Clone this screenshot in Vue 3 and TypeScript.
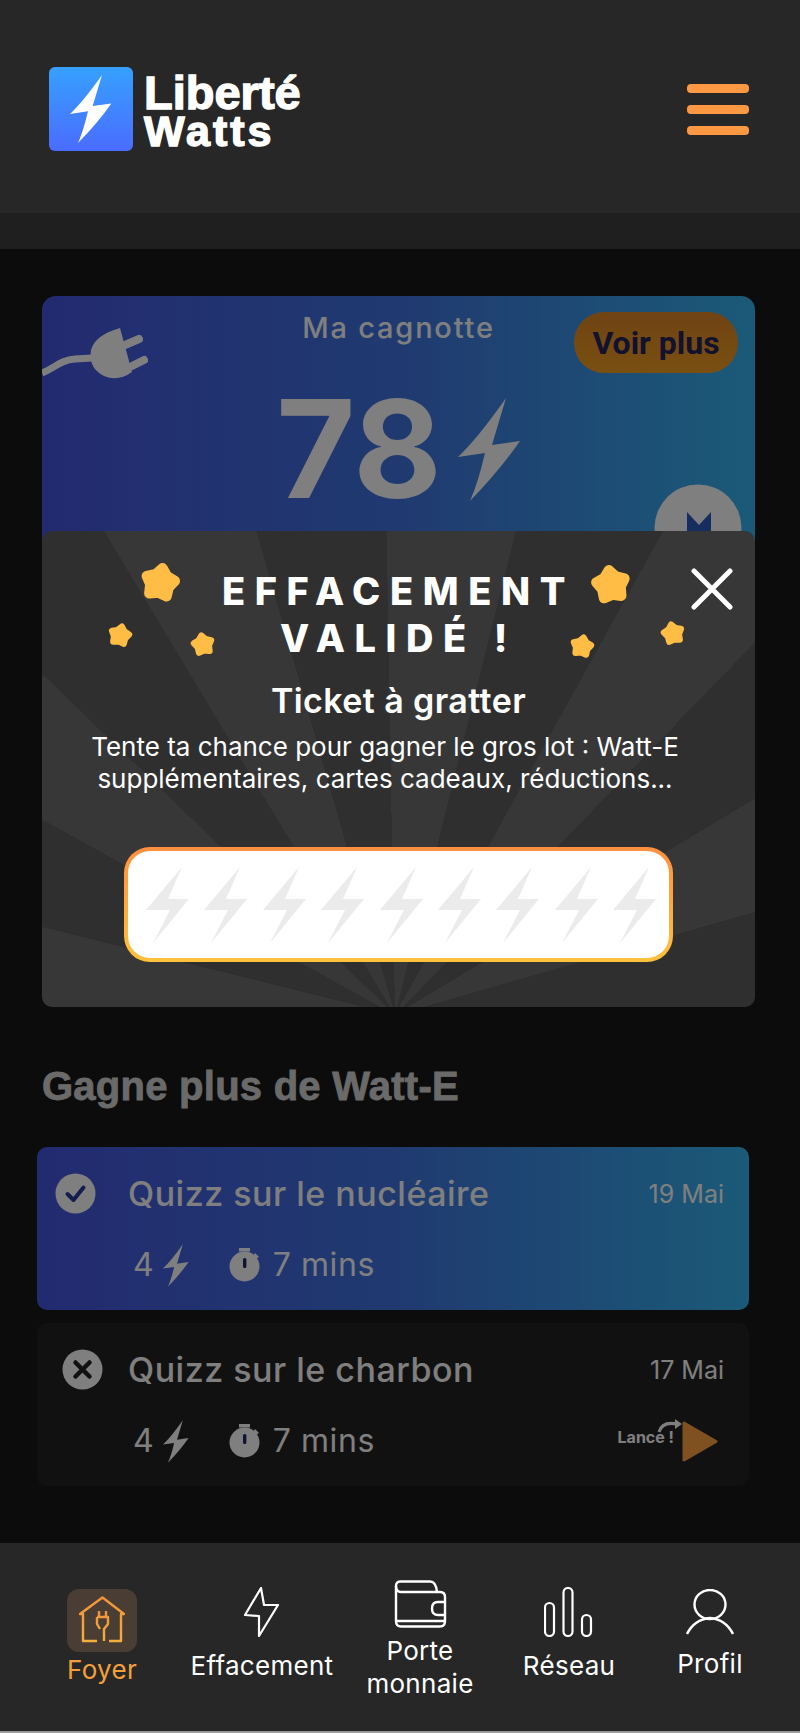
<script setup lang="ts">
interface Quiz {
  title: string
  date: string
  done: boolean
}

interface NavItem {
  lines: string[]
  icon: string
  active?: boolean
}

const quizzes: Quiz[] = [
  { title: 'Quizz sur le nucléaire', date: '19 Mai', done: true },
  { title: 'Quizz sur le charbon', date: '17 Mai', done: false },
]

const navItems: NavItem[] = [
  { lines: ['Foyer'], icon: 'home', active: true },
  { lines: ['Effacement'], icon: 'bolt' },
  { lines: ['Porte', 'monnaie'], icon: 'wallet' },
  { lines: ['Réseau'], icon: 'bars' },
  { lines: ['Profil'], icon: 'user' },
]

const scratchBolts = 9
const boltPath = 'M48 0Q20 40 0 59L27 55Q20 85 12 103Q42 72 62 43L34 47Q42 20 48 0Z'
const stars = ['a', 'b', 'c', 'd', 'e', 'f']
const starPoints = '20,7 25,13.1 32.4,16 28.1,22.6 27.6,30.5 20,28.5 12.4,30.5 11.9,22.6 7.6,16 15,13.1'
</script>

<template>
  <div class="page">
    <header class="topbar">
      <div class="logo">
        <div class="logo-mark">
          <svg width="42" height="68" viewBox="0 0 63 103" preserveAspectRatio="none"><path :d="boltPath" fill="#fff" /></svg>
        </div>
        <div class="logo-text">
          <span class="logo-top">Liberté</span>
          <span class="logo-bottom">Watts</span>
        </div>
      </div>
      <div class="burger"><span></span><span></span><span></span></div>
    </header>
    <div class="band"></div>

    <main class="content">
      <section class="wallet-card">
        <svg class="plug" width="106" height="56" viewBox="42 326 106 56">
          <path d="M120 328L132 372Q118 382 104 376Q88 368 91 350Q95 335 120 328Z" fill="#fff" />
          <path d="M125 345L139 339M132 366L144 360" stroke="#fff" stroke-width="8" stroke-linecap="round" />
          <path d="M42 373C55 368 60 360 75 359L92 358" stroke="#fff" stroke-width="7" fill="none" />
        </svg>
        <h2 class="wallet-title">Ma cagnotte</h2>
        <button class="more">Voir plus</button>
        <div class="balance">
          <span>78</span>
          <svg width="63" height="103" viewBox="0 0 63 103"><path :d="boltPath" fill="#fff" /></svg>
        </div>
        <svg class="coin" width="88" height="88" viewBox="0 0 88 88">
          <circle cx="44" cy="44" r="43.5" fill="#fff" />
          <path d="M33 28L45 41L57 28V62H33Z" fill="#2c5ac0" />
        </svg>
      </section>

      <h2 class="section-title">Gagne plus de Watt-E</h2>

      <article v-for="quiz in quizzes" :key="quiz.title" class="quiz" :class="{ done: quiz.done }">
        <div class="quiz-status">
          <svg width="41" height="41" viewBox="0 0 41 41">
            <circle cx="20.5" cy="20.5" r="20" fill="#fff" />
            <path v-if="quiz.done" d="M12.5 21L18.5 27L28.5 14.5" stroke="#2b3b9e" stroke-width="4" fill="none" stroke-linecap="round" stroke-linejoin="round" />
            <path v-else d="M13.5 13.5L27.5 27.5M27.5 13.5L13.5 27.5" stroke="#222" stroke-width="4.5" stroke-linecap="round" />
          </svg>
        </div>
        <div class="quiz-body">
          <div class="quiz-head">
            <h3>{{ quiz.title }}</h3>
            <span class="quiz-date">{{ quiz.date }}</span>
          </div>
          <div class="quiz-meta">
            <span>4</span>
            <svg class="meta-bolt" width="26" height="43" viewBox="0 0 63 103"><path :d="boltPath" fill="#fff" /></svg>
            <svg class="watch" width="32" height="34" viewBox="0 0 32 34">
              <rect x="10" y="0" width="11" height="3.5" fill="#fff" />
              <circle cx="15.5" cy="18.5" r="15" fill="#fff" />
              <path d="M26 5L30 9L27 11L24 8Z" fill="#fff" />
              <rect x="14" y="10" width="3.4" height="10" rx="1.5" fill="#222a66" />
            </svg>
            <span class="duration">7 mins</span>
            <div v-if="!quiz.done" class="launch">
              <span class="launch-label">Lance !</span>
              <svg class="launch-arrow" width="26" height="14" viewBox="0 0 26 14">
                <path d="M2 13C4 6 10 3 20 5" stroke="#fff" stroke-width="3" fill="none" />
                <path d="M18 0L25 5L18 10Z" fill="#fff" />
              </svg>
              <svg width="36" height="41" viewBox="0 0 36 41"><path d="M2 2L34 20.5L2 39Z" fill="#ffa040" stroke="#ffa040" stroke-width="3" stroke-linejoin="round" /></svg>
            </div>
          </div>
        </div>
      </article>

      <div class="scrim"></div>

      <section class="modal">
        <svg v-for="s in stars" :key="s" class="star" :class="`star-${s}`" viewBox="0 0 40 40"><polygon :points="starPoints" /></svg>
        <svg class="close" width="42" height="42" viewBox="0 0 42 42"><path d="M3 3L39 39M39 3L3 39" stroke="#fff" stroke-width="5" stroke-linecap="round" /></svg>

        <h1 class="modal-title">EFFACEMENT<br />VALIDÉ !</h1>
        <h2 class="modal-sub">Ticket à gratter</h2>
        <p class="modal-text">Tente ta chance pour gagner le gros lot : Watt-E<br />supplémentaires, cartes cadeaux, réductions...</p>
        <div class="ticket">
          <div class="ticket-inner">
            <svg v-for="n in scratchBolts" :key="n" width="43" height="76" viewBox="0 0 43 76">
              <polygon points="36,0 0,43 24,43 7,76 43,32 22,32" fill="#ebebeb" />
            </svg>
          </div>
        </div>
      </section>
    </main>

    <nav class="bottom-nav">
      <div v-for="item in navItems" :key="item.icon" class="nav-item" :class="[item.icon, { active: item.active }]">
        <div v-if="item.icon === 'home'" class="nav-badge">
          <svg width="46" height="48" viewBox="0 0 46 48" fill="none" stroke="url(#homeGrad)" stroke-width="2.4" stroke-linejoin="round">
            <defs>
              <linearGradient id="homeGrad" x1="0" y1="0" x2="0" y2="1">
                <stop offset="0" stop-color="#f2923c" />
                <stop offset="1" stop-color="#f4ae3c" />
              </linearGradient>
            </defs>
            <path d="M18 45H4V18H1L23.5 1.5L45 18H42V45H30" />
            <path d="M18 21H29V28L25 33V45M20 21V15M27 21V15M18 21V28L21 33" />
          </svg>
        </div>
        <svg v-else-if="item.icon === 'bolt'" width="36" height="50" viewBox="0 0 36 50" fill="none" stroke="#fff" stroke-width="2.2" stroke-linejoin="round">
          <path d="M17 1L1 28L15 29L15 49L34 18L20 18Z" />
        </svg>
        <svg v-else-if="item.icon === 'wallet'" width="53" height="48" viewBox="0 0 53 48" fill="none" stroke="#fff" stroke-width="2.4">
          <path d="M2 6Q2 1.5 6.5 1.5H36Q42 1.5 43 12H46Q51 12 51 17V41Q51 46.5 46 46.5H7Q2 46.5 2 41Z" />
          <path d="M2 6Q2 12 7 12H43" />
          <path d="M51 22H44Q38 22 38 28.5Q38 35 44 35H51" />
          <path d="M3 41H50" />
        </svg>
        <svg v-else-if="item.icon === 'bars'" width="50" height="50" viewBox="0 0 50 50" fill="none" stroke="#fff" stroke-width="2.2">
          <rect x="1" y="16" width="9" height="33" rx="4.5" />
          <rect x="19.5" y="1" width="9" height="48" rx="4.5" />
          <rect x="38" y="28" width="9" height="21" rx="4.5" />
        </svg>
        <svg v-else width="48" height="46" viewBox="0 0 48 46" fill="none" stroke="#fff" stroke-width="2.4">
          <ellipse cx="24" cy="15.5" rx="15.5" ry="14.5" />
          <path d="M1 45C6 35 14 30 24 29C34 30 42 35 47 45" />
        </svg>
        <span class="nav-label">
          <template v-for="line in item.lines" :key="line">{{ line }}<br /></template>
        </span>
      </div>
    </nav>
  </div>
</template>

<style>
html,
body {
  margin: 0;
  background: #181818;
}
</style>

<style scoped>
.page {
  width: 800px;
  height: 1733px;
  display: flex;
  flex-direction: column;
  overflow: hidden;
  font-family: Inter, "Open Sans", sans-serif;
  color: #fff;
}

.topbar {
  height: 213px;
  flex: none;
  background: #272727;
  display: flex;
  align-items: flex-start;
  justify-content: space-between;
  padding: 67px 51px 0 49px;
  box-sizing: border-box;
}

.logo {
  display: flex;
  gap: 11px;
}

.logo-mark {
  width: 84px;
  height: 84px;
  border-radius: 6px;
  background: linear-gradient(180deg, #36a0ff, #4a6cff);
  display: flex;
  align-items: center;
  justify-content: center;
}

.logo-text {
  font-family: "Liberation Sans", sans-serif;
  font-weight: 700;
  padding-top: 8px;
  -webkit-text-stroke: 1.4px #fff;
}

.logo-top,
.logo-bottom {
  display: block;
  line-height: 36px;
}

.logo-top {
  font-size: 47px;
}

.logo-bottom {
  font-size: 43px;
  letter-spacing: 3px;
  margin-top: 2px;
}

.burger {
  display: flex;
  flex-direction: column;
  gap: 12px;
  padding-top: 17px;
}

.burger span {
  display: block;
  width: 62px;
  height: 9px;
  border-radius: 4px;
  background: #ff9843;
}

.band {
  height: 36px;
  flex: none;
  background: #1f1f1f;
}

.content {
  position: relative;
  flex: 1;
  background: #181818;
  padding: 47px 51px 0 37px;
}

.wallet-card {
  position: relative;
  margin: 0 -6px 0 5px;
  height: 700px;
  border-radius: 14px;
  background: linear-gradient(90deg, #4656e0, #4074e0 50%, #36b4f0);
  overflow: hidden;
}

.plug {
  position: absolute;
  left: 0;
  top: 30px;
}

.wallet-title {
  margin: 0;
  padding-top: 15px;
  text-align: center;
  font-size: 29px;
  line-height: 34px;
  font-weight: 500;
  letter-spacing: 1.8px;
}

.more {
  position: absolute;
  right: 17px;
  top: 16px;
  width: 164px;
  height: 61px;
  border: 0;
  border-radius: 30px;
  background: linear-gradient(180deg, #df8726, #f29f24);
  font-family: Roboto, sans-serif;
  font-size: 32px;
  font-weight: 700;
  color: #25235c;
}

.balance {
  display: flex;
  align-items: center;
  justify-content: center;
  gap: 16px;
  margin-top: 45px;
  font-size: 136px;
  line-height: 118px;
  font-weight: 700;
}

.coin {
  position: absolute;
  right: 13px;
  top: 188px;
}

.section-title {
  margin: 67px 0 0 5px;
  font-family: "Liberation Sans", sans-serif;
  font-size: 40px;
  line-height: 46px;
  font-weight: 700;
  letter-spacing: 0.25px;
  color: #d4d4d4;
  -webkit-text-stroke: 0.8px #d4d4d4;
}

.quiz {
  display: flex;
  margin-top: 38px;
  width: 712px;
  height: 163px;
  box-sizing: border-box;
  border-radius: 10px;
  background: #232323;
  padding: 25px 25px 0 25px;
  position: relative;
}

.quiz + .quiz {
  margin-top: 13px;
}

.quiz.done {
  background: linear-gradient(90deg, #4656e0, #4074e0 50%, #36b4f0);
  padding-left: 18px;
}

.quiz-status {
  width: 66px;
  flex: none;
  padding-top: 1px;
}

.quiz.done .quiz-status {
  width: 73px;
}

.quiz-body {
  flex: 1;
}

.quiz-head {
  display: flex;
  justify-content: space-between;
  align-items: center;
}

.quiz-head h3 {
  margin: 0;
  font-size: 34px;
  line-height: 44px;
  font-weight: 500;
  letter-spacing: 0.5px;
}

.quiz-date {
  font-size: 25px;
}

.quiz-meta {
  display: flex;
  align-items: center;
  margin-top: 27px;
  font-size: 32px;
  line-height: 44px;
  position: relative;
  padding-left: 5px;
}

.duration {
  letter-spacing: 0.6px;
}

.meta-bolt {
  margin-left: 9px;
  margin-right: 40px;
}

.watch {
  margin-right: 12px;
}

.launch {
  margin-left: auto;
  margin-right: 6px;
  display: flex;
  align-items: center;
  position: relative;
}

.launch-label {
  font-size: 16px;
  font-weight: 700;
  margin-right: 8px;
  margin-top: -8px;
  letter-spacing: 0;
}

.launch-arrow {
  position: absolute;
  right: 35px;
  top: -2px;
}

.scrim {
  position: absolute;
  inset: 0;
  background: rgba(0, 0, 0, 0.5);
}

.modal {
  position: absolute;
  left: 42px;
  top: 282px;
  width: 713px;
  height: 476px;
  border-radius: 10px;
  overflow: hidden;
  background: repeating-conic-gradient(from -1deg at 353px 484px, #373737 0deg 15deg, #2f2f2f 15deg 30deg);
  text-align: center;
}

.star {
  position: absolute;
  fill: #ffbd45;
  stroke: #ffbd45;
  stroke-width: 9;
  stroke-linejoin: round;
}

.star-a { left: 95px; top: 28px; width: 46px; height: 48px; transform: rotate(10deg); }
.star-b { left: 546px; top: 30px; width: 46px; height: 48px; transform: rotate(-8deg); }
.star-c { left: 64px; top: 90px; width: 28px; height: 29px; transform: rotate(12deg); }
.star-d { left: 147px; top: 99px; width: 28px; height: 29px; transform: rotate(-10deg); }
.star-e { left: 526px; top: 101px; width: 28px; height: 29px; transform: rotate(10deg); }
.star-f { left: 617px; top: 88px; width: 28px; height: 29px; transform: rotate(-12deg); }

.close {
  position: absolute;
  left: 649px;
  top: 37px;
}

.modal-title {
  margin: 0;
  padding-top: 37px;
  font-size: 38px;
  line-height: 47px;
  font-weight: 800;
  letter-spacing: 9.6px;
}

.modal-sub {
  margin: 19px 0 0;
  font-size: 34px;
  line-height: 40px;
  font-weight: 600;
  letter-spacing: 0.4px;
}

.modal-text {
  margin: 10px 27px 0 0;
  font-size: 26px;
  line-height: 32px;
  font-weight: 400;
}

.ticket {
  margin: 52px 0 0 82px;
  width: 549px;
  height: 115px;
  padding: 4px;
  box-sizing: border-box;
  border-radius: 26px;
  background: linear-gradient(180deg, #ff8f3f, #ffc23a);
}

.ticket-inner {
  height: 100%;
  border-radius: 22px;
  background: #fff;
  display: flex;
  align-items: center;
  justify-content: space-between;
  padding: 0 13px 0 18px;
  box-sizing: border-box;
}

.bottom-nav {
  height: 190px;
  flex: none;
  background: #272727;
  display: grid;
  grid-template-columns: 132px 188px 128px 170px 112px;
  padding-left: 36px;
  box-sizing: border-box;
  align-items: center;
  position: relative;
  z-index: 1;
  border-bottom: 2px solid #9a9a9a;
}

.nav-item {
  display: flex;
  flex-direction: column;
  align-items: center;
  font-size: 26px;
  line-height: 33px;
  letter-spacing: 0.3px;
  text-align: center;
  padding-bottom: 6px;
}

.nav-label {
  margin-top: 12px;
}

.nav-item.active {
  color: #f3a03c;
  padding-top: 6px;
}

.nav-item.wallet {
  padding-top: 6px;
  padding-bottom: 0;
}

.nav-badge {
  width: 70px;
  height: 63px;
  border-radius: 12px;
  background: #4a3e34;
  display: flex;
  align-items: center;
  justify-content: center;
}

.active .nav-label {
  margin-top: 1px;
}

.wallet .nav-label {
  margin-top: 6px;
}
</style>
